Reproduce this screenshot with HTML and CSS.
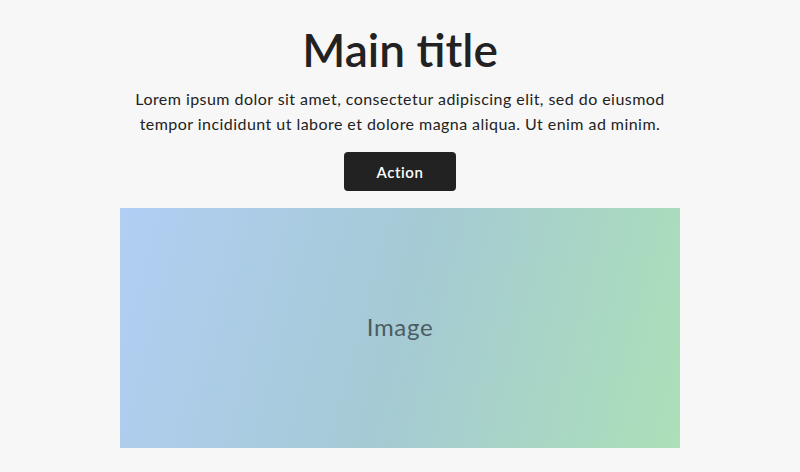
FILE: index.html
```html
<!DOCTYPE html>
<html lang="en">
<head>
    <meta charset="UTF-8">
    <meta name="viewport" content="width=device-width, initial-scale=1.0">
    <title>Main title</title>
    <link rel="stylesheet" href="styles.css">
</head>
<body>

<div class="hero">
    <h1 class="title">Main title</h1>
    <p class="lead">Lorem ipsum dolor sit amet, consectetur adipiscing elit, sed do eiusmod tempor incididunt ut labore et dolore magna aliqua. Ut enim ad minim.</p>
    <button class="button">Action</button>
    <div class="image">Image</div>
</div>

</body>
</html>
```

FILE: styles.css
```css
body {
    font-family: Lato, "Open Sans", sans-serif;
    margin: 0;
    background-color: #f7f7f7;
    color: #222222;
}
.hero {
    display: flex;
    flex-direction: column;
    align-items: center;
    text-align: center;
    padding-top: 22px;
}
.title {
    font-size: 46px;
    font-weight: 600;
    line-height: 56px;
    margin: 0;
}
.lead {
    width: 550px;
    font-size: 16px;
    line-height: 25px;
    letter-spacing: 0.45px;
    margin: 8px 0 0;
}
.button {
    margin-top: 16px;
    width: 112px;
    height: 39px;
    border: none;
    border-radius: 4px;
    background-color: #222222;
    color: #ffffff;
    font-family: inherit;
    font-size: 15px;
    font-weight: 600;
    letter-spacing: 0.6px;
}
.image {
    margin-top: 17px;
    padding-bottom: 4px;
    box-sizing: border-box;
    width: 560px;
    height: 240px;
    display: flex;
    align-items: center;
    justify-content: center;
    background: linear-gradient(105deg, #b1cef4 0%, #a5cad4 50%, #abe0b8 100%);
    color: #4b5c62;
    font-size: 24px;
    letter-spacing: 0.7px;
}
```
